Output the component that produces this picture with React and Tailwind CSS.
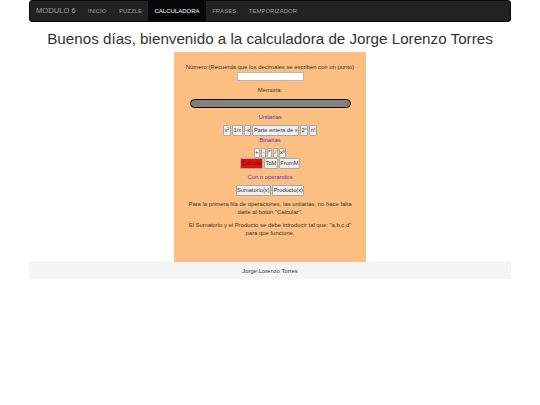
import React from "react";

function CalcButton({ children, className = "" }) {
    return (
        <button className={"h-[11px] px-[0.5px] border border-[#a8a8a8] rounded-[1px] bg-[#efefef] text-[5.7px] leading-none text-[#333] " + className}>
            {children}
        </button>
    );
}

export default function App() {
    const links = ["INICIO", "PUZZLE", "CALCULADORA", "FRASES", "TEMPORIZADOR"];

    return (
        <div className="w-[540px] h-[405px] bg-white font-['Liberation_Sans',Arial,sans-serif] text-[#333]">
            <div className="mx-[29px]">
                <nav className="h-[22px] flex items-stretch bg-[#222] border border-[#080808] rounded-[3px] pl-[6px]">
                    <span className="self-center text-[7.6px] text-[#9d9d9d] mr-[6px]">MODULO 6</span>
                    {links.map((link) => (
                        <a
                            key={link}
                            className={
                                "flex items-center px-[6.3px] text-[6px] " +
                                (link === "CALCULADORA" ? "bg-[#080808] text-white" : "text-[#9d9d9d]")
                            }
                        >
                            {link}
                        </a>
                    ))}
                </nav>

                <h1 className="h-[30px] pt-[4px] flex items-center justify-center text-[15.2px] text-[#333] whitespace-nowrap">
                    Buenos días, bienvenido a la calculadora de Jorge Lorenzo Torres
                </h1>

                <main className="w-[192px] h-[210px] mx-auto bg-[#fcbf81] flex flex-col items-center text-[5.9px] leading-[8px] text-[#333] pt-[11px]">
                    <p>Número:(Recuerda que los decimales se escriben con un punto)</p>
                    <input className="w-[67px] h-[9px] bg-white border border-[#b5b5b5] mt-[1px]" />
                    <p className="mt-[5px]">Memoria:</p>
                    <div className="w-[161px] h-[9px] mt-[5px] rounded-full bg-[#808080] border border-[#111]"></div>
                    <p className="mt-[5px] text-[#5b2fc4]">Unitarias</p>
                    <div className="flex gap-[1px] mt-[4px]">
                        <CalcButton>x<sup className="text-[4px]">2</sup></CalcButton>
                        <CalcButton>1/x</CalcButton>
                        <CalcButton>-x</CalcButton>
                        <CalcButton>Parte entera de x</CalcButton>
                        <CalcButton>2<sup className="text-[4px]">x</sup></CalcButton>
                        <CalcButton>n!</CalcButton>
                    </div>
                    <p className="text-[#5b2fc4]">Binarias</p>
                    <div className="flex gap-[1px] mt-[4px]">
                        <CalcButton className="!h-[10px]">+</CalcButton>
                        <CalcButton className="!h-[10px]">-</CalcButton>
                        <CalcButton className="!h-[10px]">*</CalcButton>
                        <CalcButton className="!h-[10px]">/</CalcButton>
                        <CalcButton className="!h-[10px]">x<sup className="text-[4px]">y</sup></CalcButton>
                    </div>
                    <div className="flex gap-[1px]">
                        <CalcButton className="w-[23px] !bg-[#e01010] !text-[#8a1010]">Calcular</CalcButton>
                        <CalcButton>ToM</CalcButton>
                        <CalcButton>FromM</CalcButton>
                    </div>
                    <p className="mt-[4px] text-[#5b2fc4]">Con n operandos</p>
                    <div className="flex gap-[1px] mt-[4px]">
                        <CalcButton>Sumatorio(x)</CalcButton>
                        <CalcButton>Producto(x)</CalcButton>
                    </div>
                    <p className="mt-[4px] text-center w-[172px]">
                        Para la primera fila de operaciones, las unitarias, no hace falta darle al botón "Calcular".
                    </p>
                    <p className="mt-[5px] text-center w-[172px]">
                        El Sumatorio y el Producto se debe introducir tal que: "a,b,c,d" para que funcione.
                    </p>
                </main>

                <footer className="h-[17px] flex items-center justify-center bg-[#f5f5f5] border-t border-[#eee] text-[5.9px] text-[#333]">
                    Jorge Lorenzo Torres
                </footer>
            </div>
        </div>
    );
}
